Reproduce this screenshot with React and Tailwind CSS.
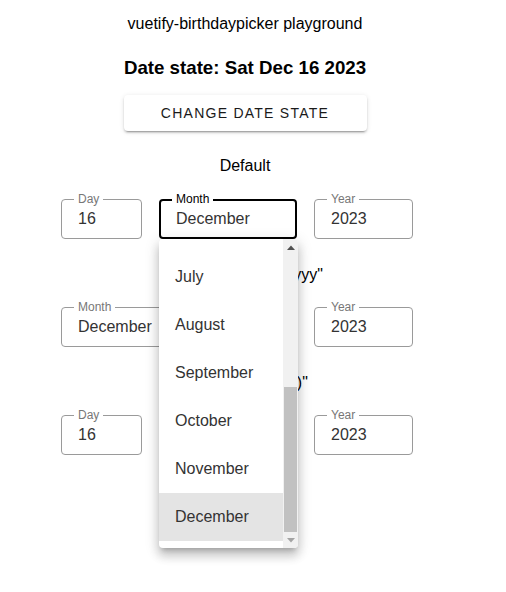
import React from "react";

const months = [
  "January","February","March","April","May","June",
  "July","August","September","October","November","December",
];

function Field({ label, value, width, focused, children }) {
  return (
    <div
      className={`relative h-[40px] rounded-[4px] ${
        focused ? "border-2 border-black" : "border border-[#9a9a9a]"
      } ${width}`}
    >
      <span
        className={`absolute ${focused ? "top-[-9px] left-[11px] text-black" : "top-[-8px] left-[12px] text-[#777]"} bg-white px-[4px] text-[12px] leading-[14px]`}
      >
        {label}
      </span>
      <div
        className={`flex h-full items-center ${focused ? "pl-[15px]" : "pl-[16px]"} text-[16px] text-[#333]`}
      >
        {value}
      </div>
      {children}
    </div>
  );
}

function Menu() {
  return (
    <div className="absolute left-[-2px] top-[38px] z-10 flex h-[309px] w-[139px] overflow-hidden rounded-[4px] bg-white shadow-[0_5px_5px_-3px_rgba(0,0,0,0.2),0_8px_10px_1px_rgba(0,0,0,0.14),0_3px_14px_2px_rgba(0,0,0,0.12)]">
      <div className="flex h-full flex-1 flex-col justify-end overflow-hidden pb-[7px]">
        {months.map((m) => (
          <div
            key={m}
            className={`flex h-[48px] shrink-0 items-center pl-[16px] text-[16px] text-[#333] ${
              m === "December" ? "bg-[#e4e4e4]" : ""
            }`}
          >
            {m}
          </div>
        ))}
      </div>
      <div className="flex h-full w-[15px] flex-col bg-[#f1f1f1]">
        <div className="flex h-[15px] items-center justify-center pt-[2px]">
          <svg width="8" height="5" viewBox="0 0 8 5">
            <path d="M0 5 L4 0.5 L8 5 Z" fill="#505050" />
          </svg>
        </div>
        <div className="flex-1" />
        <div className="mx-[1px] h-[145px] bg-[#c1c1c1]" />
        <div className="flex h-[16px] items-center justify-center">
          <svg width="8" height="5" viewBox="0 0 8 5">
            <path d="M0 0 L8 0 L4 4.5 Z" fill="#a3a3a3" />
          </svg>
        </div>
      </div>
    </div>
  );
}

export default function App() {
  return (
    <div className="min-h-[592px] w-full bg-white font-['Liberation_Sans',Arial,sans-serif] text-black">
      <div className="pr-[16px] pt-[12px] text-center text-[16px] leading-[24px]">
        vuetify-birthdaypicker playground
      </div>
      <div className="mt-[18px] pr-[16px] text-center text-[18.72px] font-bold leading-[28px]">
        Date state: Sat Dec 16 2023
      </div>
      <div className="mt-[13px] flex justify-center pr-[16px]">
        <button className="h-[36px] w-[243px] rounded-[4px] bg-white text-[14px] font-medium uppercase tracking-[1.25px] text-[#1a1a1a] shadow-[0_3px_1px_-2px_rgba(0,0,0,0.2),0_2px_2px_0_rgba(0,0,0,0.14),0_1px_5px_0_rgba(0,0,0,0.12)]">
          Change date state
        </button>
      </div>

      <div className="mt-[23px] pr-[16px] text-center text-[16px] leading-[24px]">Default</div>
      <div className="mt-[21px] flex gap-[17px] pl-[61px]">
        <Field label="Day" value="16" width="w-[81px]" />
        <Field label="Month" value="December" width="w-[138px]" focused>
          <Menu />
        </Field>
        <Field label="Year" value="2023" width="w-[99px]" />
      </div>

      <div className="mt-[24px] pr-[12px] text-center text-[16px] leading-[24px]">
        Format "mm/dd/yyyy"
      </div>
      <div className="mt-[20px] flex gap-[17px] pl-[61px]">
        <Field label="Month" value="December" width="w-[138px]" />
        <Field label="Day" value="16" width="w-[81px]" />
        <Field label="Year" value="2023" width="w-[99px]" />
      </div>

      <div className="mt-[24px] pr-[12px] text-center text-[16px] leading-[24px]">
        Min "Date(2000)"
      </div>
      <div className="mt-[20px] flex gap-[17px] pl-[61px]">
        <Field label="Day" value="16" width="w-[81px]" />
        <Field label="Month" value="December" width="w-[138px]" />
        <Field label="Year" value="2023" width="w-[99px]" />
      </div>
    </div>
  );
}
